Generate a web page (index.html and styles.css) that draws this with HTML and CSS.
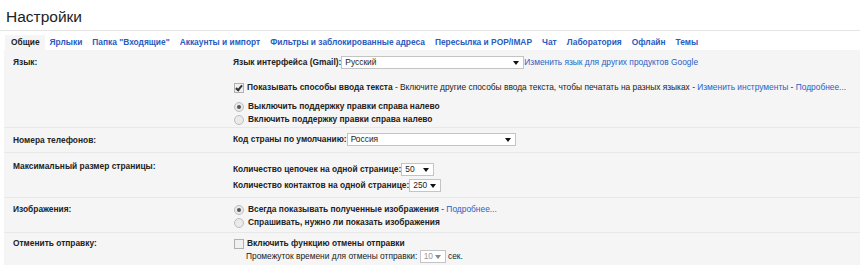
FILE: index.html
```html
<!DOCTYPE html>
<html>
<head>
<meta charset="utf-8">
<link rel="stylesheet" href="styles.css">
</head>
<body>
<div class="page">
  <div class="title">Настройки</div>
  <div class="tabs">
    <span class="tab active">Общие</span>
    <span class="tab">Ярлыки</span>
    <span class="tab">Папка "Входящие"</span>
    <span class="tab">Аккаунты и импорт</span>
    <span class="tab">Фильтры и заблокированные адреса</span>
    <span class="tab">Пересылка и POP/IMAP</span>
    <span class="tab">Чат</span>
    <span class="tab">Лаборатория</span>
    <span class="tab">Офлайн</span>
    <span class="tab">Темы</span>
  </div>
  <div class="content">
    <div class="row r-lang">
      <div class="label">Язык:</div>
      <div class="value">
        <div class="line"><b>Язык интерфейса (Gmail):</b> <span class="select s-lang">Русский<i class="arrow"></i></span> <a>Изменить язык для других продуктов Google</a></div>
        <div class="line l-check"><span class="cb checked"></span> <b>Показывать способы ввода текста</b> - Включите другие способы ввода текста, чтобы печатать на разных языках - <a>Изменить инструменты</a> - <a>Подробнее...</a></div>
        <div class="line l-radio1"><span class="radio on"></span><b>Выключить поддержку правки справа налево</b></div>
        <div class="line l-radio"><span class="radio"></span><b>Включить поддержку правки справа налево</b></div>
      </div>
    </div>
    <div class="row r-phone">
      <div class="label">Номера телефонов:</div>
      <div class="value">
        <div class="line"><b>Код страны по умолчанию:</b> <span class="select s-country">Россия<i class="arrow"></i></span></div>
      </div>
    </div>
    <div class="row r-size">
      <div class="label">Максимальный размер страницы:</div>
      <div class="value">
        <div class="line"><b>Количество цепочек на одной странице:</b> <span class="select s-small">50<i class="arrow"></i></span></div>
        <div class="line l-sel2"><b>Количество контактов на одной странице:</b> <span class="select s-small2">250<i class="arrow"></i></span></div>
      </div>
    </div>
    <div class="row r-img">
      <div class="label">Изображения:</div>
      <div class="value">
        <div class="line"><span class="radio on"></span><b>Всегда показывать полученные изображения</b> - <a>Подробнее...</a></div>
        <div class="line l-radio"><span class="radio"></span><b>Спрашивать, нужно ли показать изображения</b></div>
      </div>
    </div>
    <div class="row r-undo">
      <div class="label">Отменить отправку:</div>
      <div class="value">
        <div class="line"><span class="cb"></span> <b>Включить функцию отмены отправки</b></div>
        <div class="line l-sub">Промежуток времени для отмены отправки: <span class="select s-dis">10<i class="arrow gray"></i></span> сек.</div>
      </div>
    </div>
  </div>
</div>
</body>
</html>
```
FILE: styles.css
```css
html, body { margin: 0; padding: 0; background: #fff; }
body { font-family: "Liberation Sans", Arial, sans-serif; font-size: 8.4px; color: #222; }
.page { width: 860px; height: 265px; overflow: hidden; }
.title { font-size: 15.5px; color: #222; padding: 8px 0 0 6px; height: 22px; line-height: 18px; border-bottom: 1px solid #e5e5e5; }
.tabs { display: flex; padding: 4px 0 0 5px; height: 15px; background: #fff; white-space: nowrap; }
.tab { font-weight: bold; color: #2a5bbf; padding: 0 5px 0 6px; line-height: 15px; }
.tab + .tab { margin-left: -1px; }
.tab.active { color: #222; background: #f5f5f5; }
.content { background: #f5f5f5; margin-left: 4px; }
.row { display: grid; grid-template-columns: 229px 1fr; border-bottom: 1px solid #e8e8e8; }
.label { font-weight: bold; padding: 7px 0 0 9px; white-space: nowrap; }
.value { padding-top: 6px; }
.line { line-height: 13px; display: flex; align-items: center; white-space: pre; }
a { color: #2962c5; }
b { font-weight: bold; }
.r-lang { height: 77px; }
.r-phone { height: 24px; }
.r-phone .label { padding-top: 7px; }
.r-phone .value { padding-top: 5px; }
.r-size { height: 44px; }
.r-size .label { padding-top: 8px; }
.r-size .value { padding-top: 10px; }
.r-img { height: 34px; }
.r-img .label { padding-top: 6px; }
.r-img .value { padding-top: 5px; }
.r-undo { border-bottom: none; height: 40px; }
.r-undo .label { padding-top: 5px; }
.r-undo .value { padding-top: 4px; }
.l-check { margin-top: 12px; }
.l-radio1 { margin-top: 6px; }
.l-sel2 { margin-top: 3px; }
.l-sub { padding-left: 13px; }
.select { position: relative; display: inline-block; height: 11px; line-height: 11px; background: #fff; border: 1px solid #c4c4c4; padding: 0 0 0 3px; box-sizing: content-box; }
.s-lang { width: 178px; }
.s-country { width: 164px; }
.s-small { width: 28px; }
.s-small2 { width: 27px; }
.s-dis { width: 21px; color: #999; }
.arrow { position: absolute; right: 4px; top: 4px; width: 0; height: 0; border-left: 3px solid transparent; border-right: 3px solid transparent; border-top: 4px solid #111; }
.arrow.gray { border-top-color: #888; }
.cb { display: inline-block; width: 8px; height: 8px; border: 1px solid #b0b0b0; background: #f0f0f0; margin: 0 3px 0 1px; position: relative; }
.cb.checked::after { content: ""; position: absolute; left: 2px; top: 0; width: 2px; height: 5px; border: solid #333; border-width: 0 2px 2px 0; transform: rotate(40deg); }
.radio { display: inline-block; width: 8px; height: 8px; border: 1px solid #bdbdbd; border-radius: 50%; background: #eaeaea; margin: 0 4px 0 1px; position: relative; }
.radio.on::after { content: ""; position: absolute; left: 2px; top: 2px; width: 4px; height: 4px; border-radius: 50%; background: #555; }
```
